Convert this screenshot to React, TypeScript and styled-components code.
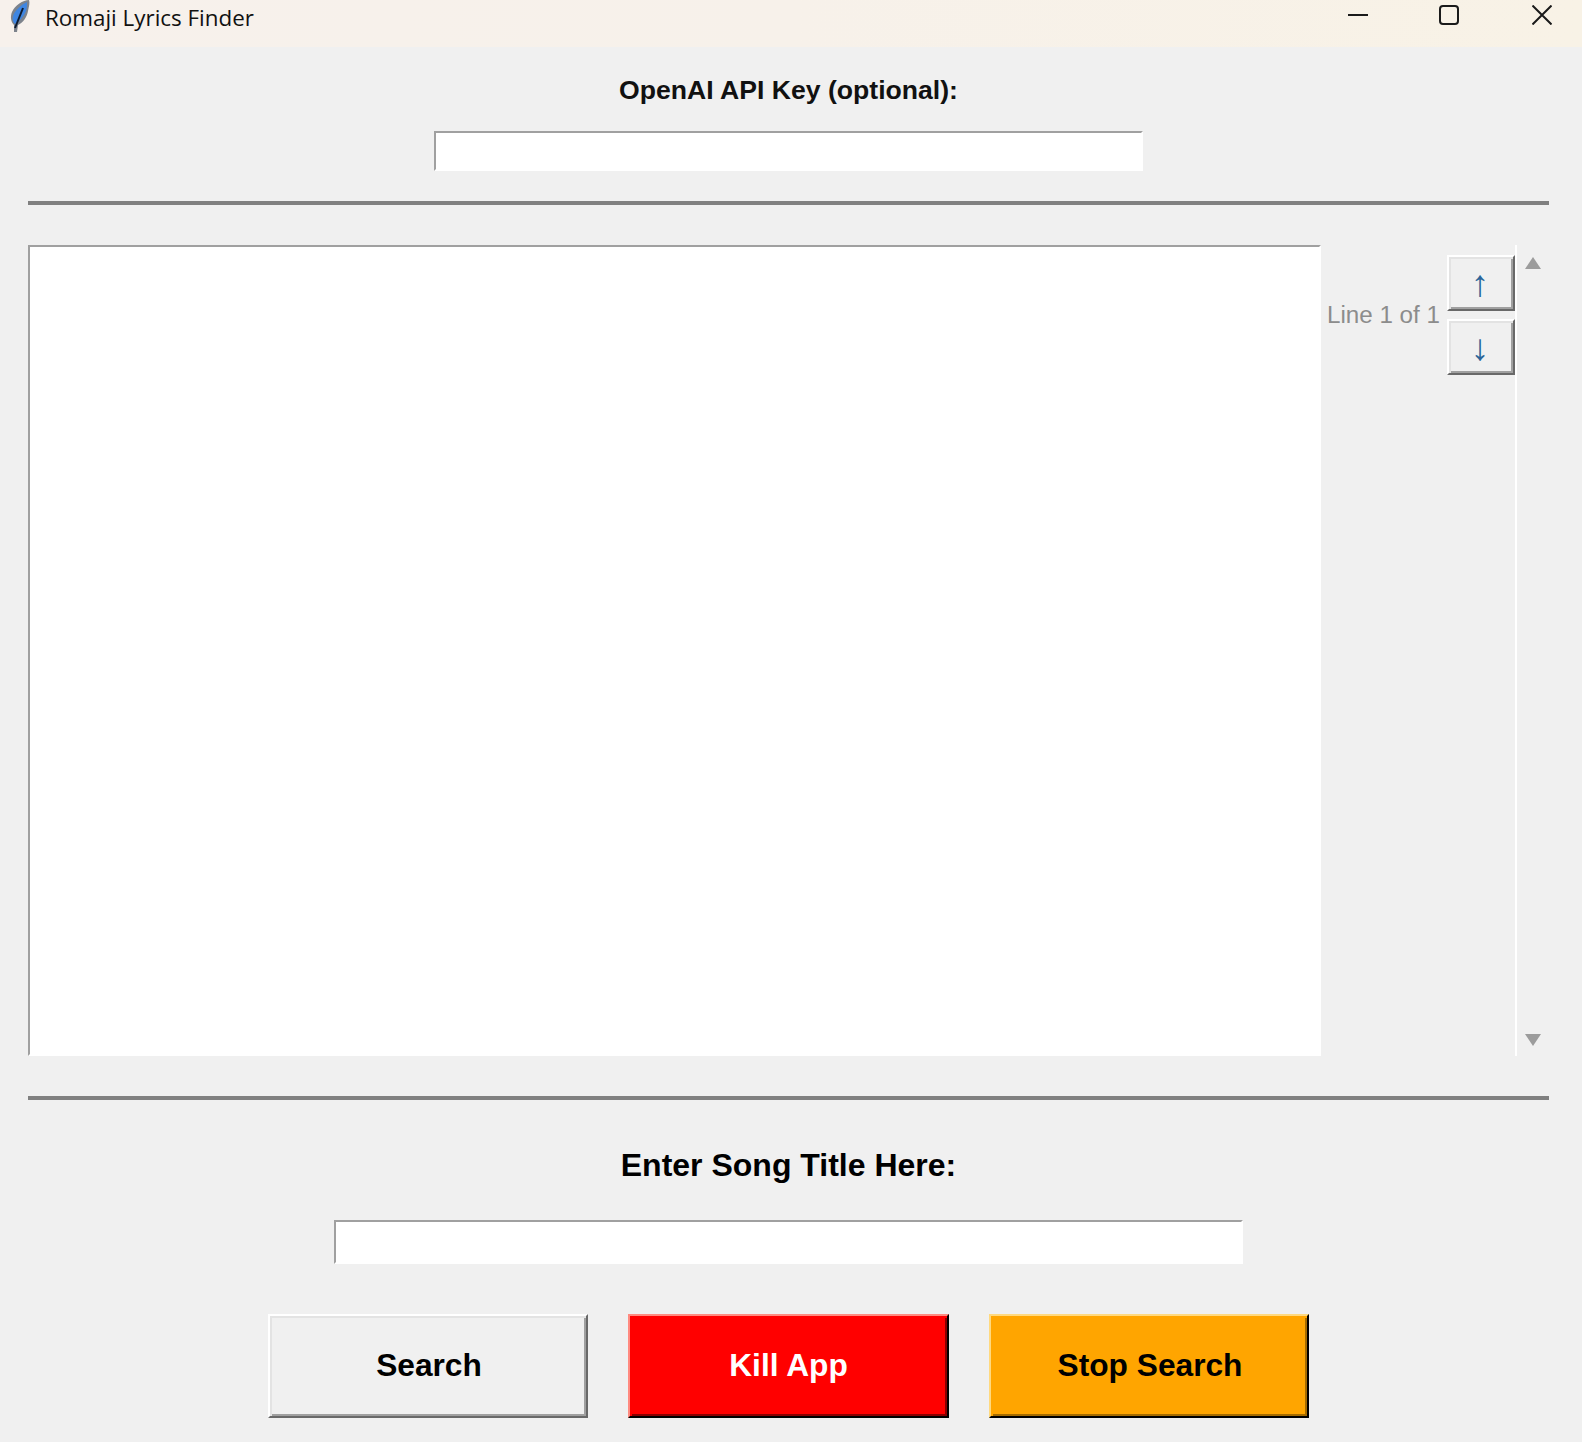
import React from "react";
import styled, { createGlobalStyle } from "styled-components";

const Global = createGlobalStyle`
  html, body { margin: 0; padding: 0; background: #f0f0f0; }
  body { font-family: "Liberation Sans", Arial, sans-serif; }
  * { box-sizing: border-box; }
`;

const Page = styled.div`
  width: 1582px;
  height: 1442px;
  display: flex;
  flex-direction: column;
  overflow: hidden;
  background: #f0f0f0;
`;

const TitleBar = styled.header`
  height: 47px;
  flex: none;
  display: flex;
  align-items: flex-start;
  background: linear-gradient(90deg, #f7f1ec 0%, #f7f1ea 50%, #f8f2e6 100%);
`;

const AppIcon = styled.svg`
  width: 22px;
  height: 33px;
  margin-left: 9px;
  flex: none;
`;

const AppTitle = styled.h1`
  margin: 3px 0 0 14px;
  font: 400 22.4px/30px "Open Sans", "Noto Sans", sans-serif;
  color: #111;
  flex: 1;
`;

const WindowButtons = styled.div`
  display: flex;
  align-items: flex-start;
  padding: 5px 30px 0 0;
  gap: 71px;
`;

const WindowIcon = styled.svg`
  width: 20px;
  height: 20px;
  display: block;
  color: #1a1a1a;
`;

const CloseIcon = styled(WindowIcon)`
  margin-left: 2px;
`;

const Main = styled.main`
  flex: 1;
  display: flex;
  flex-direction: column;
  align-items: center;
  padding: 0 33px 0 28px;
`;

const ApiLabel = styled.label`
  margin-top: 28px;
  font-size: 26.6px;
  line-height: 30px;
  font-weight: 700;
  color: #111;
`;

const Entry = styled.input<{ $width: number; $height: number; $top: number }>`
  display: block;
  width: ${(p) => p.$width}px;
  height: ${(p) => p.$height}px;
  margin-top: ${(p) => p.$top}px;
  padding: 0;
  background: #fff;
  border-style: solid;
  border-width: 2px;
  border-color: #a0a0a0 #fff #fff #a0a0a0;
  outline: none;
`;

const Separator = styled.hr<{ $top: number }>`
  width: 100%;
  height: 4px;
  margin: ${(p) => p.$top}px 0 0;
  border: 0;
  background: #808080;
  flex: none;
`;

const Viewer = styled.section`
  width: 100%;
  height: 811px;
  margin-top: 40px;
  display: flex;
  flex: none;
`;

const Lyrics = styled.textarea`
  width: 1293px;
  height: 100%;
  padding: 0;
  resize: none;
  background: #fff;
  border-style: solid;
  border-width: 2px;
  border-color: #a0a0a0 #fff #fff #a0a0a0;
  outline: none;
`;

const LineNav = styled.div`
  display: flex;
  align-items: center;
  align-self: flex-start;
  margin: 10px 0 0 6px;
  gap: 8px;
`;

const LineCount = styled.span`
  width: 112px;
  font-size: 24.2px;
  line-height: 28px;
  color: #8c8c8c;
  white-space: nowrap;
`;

const NavStack = styled.div`
  display: flex;
  flex-direction: column;
  gap: 8px;
`;

const NavButton = styled.button`
  width: 68px;
  height: 56px;
  padding: 0 2px 0 0;
  display: flex;
  align-items: center;
  justify-content: center;
  font: 400 37px/1 "Liberation Sans", sans-serif;
  color: #2a6498;
  background: #f0f0f0;
  border-style: solid;
  border-width: 2px;
  border-color: #fff #696969 #696969 #fff;
  box-shadow: inset 2px 2px #e3e3e3, inset -2px -2px #a0a0a0;
`;

const ScrollTrack = styled.div`
  width: 34px;
  height: 100%;
  border-left: 2px solid #fff;
  padding: 12px 0 10px 8px;
  display: flex;
  flex-direction: column;
  justify-content: space-between;
`;

const ScrollArrow = styled.svg`
  width: 16px;
  height: 12px;
  display: block;
  fill: #9c9c9c;
`;

const SongLabel = styled.label`
  margin-top: 47px;
  font-size: 32px;
  line-height: 36px;
  font-weight: 700;
  color: #000;
`;

const Actions = styled.div`
  display: flex;
  gap: 40px;
  margin-top: 50px;
`;

const tones = {
  plain: {
    bg: "#f0f0f0", fg: "#000", inset: 2,
    outerLight: "#fff", innerLight: "#e3e3e3",
    innerDark: "#a0a0a0", outerDark: "#696969",
  },
  red: {
    bg: "#ff0000", fg: "#fff", inset: 0,
    outerLight: "#ff8a80", innerLight: "#ff0000",
    innerDark: "#8b0000", outerDark: "#000",
  },
  orange: {
    bg: "#ffa500", fg: "#000", inset: 2,
    outerLight: "#ffd97f", innerLight: "#ffa500",
    innerDark: "#a66c00", outerDark: "#000",
  },
};

const ActionButton = styled.button<{ $tone: keyof typeof tones; $width: number }>`
  width: ${(p) => p.$width}px;
  height: 104px;
  padding: 0 0 2px ${(p) => tones[p.$tone].inset}px;
  font: 700 31.7px/36px "Liberation Sans", Arial, sans-serif;
  color: ${(p) => tones[p.$tone].fg};
  background: ${(p) => tones[p.$tone].bg};
  border-style: solid;
  border-width: 2px;
  border-color: ${(p) => {
    const t = tones[p.$tone];
    return `${t.outerLight} ${t.outerDark} ${t.outerDark} ${t.outerLight}`;
  }};
  box-shadow: ${(p) => {
    const t = tones[p.$tone];
    return `inset 2px 2px ${t.innerLight}, inset -2px -2px ${t.innerDark}`;
  }};
`;

export default function App() {
  return (
    <Page>
      <Global />
      <TitleBar>
        <AppIcon viewBox="0 0 22 33" aria-hidden="true">
          <path d="M20 0 C14 0 6 5 3 12 C1 17 2 22 5 25 L5 32 L8 32 L9 25 C14 23 18 17 19 11 C20 6 21 3 20 0 Z" fill="#7d838c" />
          <path d="M18 2 C12 5 6 10 4 16 C3 20 4 22 6 24 C11 21 15 16 17 11 C18 8 18 5 18 2 Z" fill="#3f86e2" />
          <path d="M14 8 L6 28" stroke="#0c1a30" strokeWidth="2" fill="none" />
        </AppIcon>
        <AppTitle>Romaji Lyrics Finder</AppTitle>
        <WindowButtons>
          <WindowIcon viewBox="0 0 20 20" aria-hidden="true">
            <path d="M0 10 H20" stroke="currentColor" strokeWidth="2" />
          </WindowIcon>
          <WindowIcon viewBox="0 0 20 20" aria-hidden="true">
            <rect x="1" y="1" width="18" height="18" rx="3" fill="none" stroke="currentColor" strokeWidth="2" />
          </WindowIcon>
          <CloseIcon viewBox="0 0 20 20" aria-hidden="true">
            <path d="M0.5 0.5 L19.5 19.5 M19.5 0.5 L0.5 19.5" stroke="currentColor" strokeWidth="2" />
          </CloseIcon>
        </WindowButtons>
      </TitleBar>
      <Main>
        <ApiLabel>OpenAI API Key (optional):</ApiLabel>
        <Entry $width={709} $height={40} $top={26} />
        <Separator $top={30} />
        <Viewer>
          <Lyrics />
          <LineNav>
            <LineCount>Line 1 of 1</LineCount>
            <NavStack>
              <NavButton>↑</NavButton>
              <NavButton>↓</NavButton>
            </NavStack>
          </LineNav>
          <ScrollTrack>
            <ScrollArrow viewBox="0 0 16 12" aria-hidden="true">
              <path d="M8 0 L16 12 H0 Z" />
            </ScrollArrow>
            <ScrollArrow viewBox="0 0 16 12" aria-hidden="true">
              <path d="M0 0 H16 L8 12 Z" />
            </ScrollArrow>
          </ScrollTrack>
        </Viewer>
        <Separator $top={40} />
        <SongLabel>Enter Song Title Here:</SongLabel>
        <Entry $width={909} $height={44} $top={37} />
        <Actions>
          <ActionButton $tone="plain" $width={320}>Search</ActionButton>
          <ActionButton $tone="red" $width={321}>Kill App</ActionButton>
          <ActionButton $tone="orange" $width={320}>Stop Search</ActionButton>
        </Actions>
      </Main>
    </Page>
  );
}
